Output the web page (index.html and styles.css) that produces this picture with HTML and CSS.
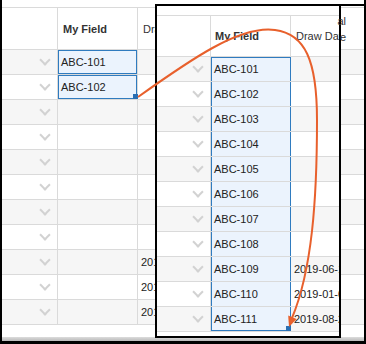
FILE: index.html
```html
<!DOCTYPE html>
<html lang="en">
<head>
    <meta charset="UTF-8">
    <title>Drag Fill</title>
    <link rel="stylesheet" href="styles.css">
</head>
<body>
    <div class="frame">
        <div class="grid">
            <div class="hdr">
                <div class="cell"></div>
                <div class="cell">My Field</div>
                <div class="cell">Draw Date</div>
            </div>
            <div class="rows">
                <div class="row"><div class="cell chev"></div><div class="cell sel">ABC-101</div><div class="cell"></div></div>
                <div class="row"><div class="cell chev"></div><div class="cell sel handle">ABC-102</div><div class="cell"></div></div>
                <div class="row"><div class="cell chev"></div><div class="cell"></div><div class="cell"></div></div>
                <div class="row"><div class="cell chev"></div><div class="cell"></div><div class="cell"></div></div>
                <div class="row"><div class="cell chev"></div><div class="cell"></div><div class="cell"></div></div>
                <div class="row"><div class="cell chev"></div><div class="cell"></div><div class="cell"></div></div>
                <div class="row"><div class="cell chev"></div><div class="cell"></div><div class="cell"></div></div>
                <div class="row"><div class="cell chev"></div><div class="cell"></div><div class="cell"></div></div>
                <div class="row"><div class="cell chev"></div><div class="cell"></div><div class="cell">2019-06-12</div></div>
                <div class="row"><div class="cell chev"></div><div class="cell"></div><div class="cell">2019-01-08</div></div>
                <div class="row"><div class="cell chev"></div><div class="cell"></div><div class="cell">2019-08-21</div></div>
            </div>
        </div>
        <div class="hscroll"></div>

        <!-- zoomed copy of the grid after the drag -->
        <div class="zoom">
            <div class="hdr">
                <div class="cell"></div>
                <div class="cell">My Field</div>
                <div class="cell">Draw Date</div>
            </div>
            <div class="rows">
                <div class="row"><div class="cell chev"></div><div class="cell fill first">ABC-101</div><div class="cell"></div></div>
                <div class="row"><div class="cell chev"></div><div class="cell fill">ABC-102</div><div class="cell"></div></div>
                <div class="row"><div class="cell chev"></div><div class="cell fill">ABC-103</div><div class="cell"></div></div>
                <div class="row"><div class="cell chev"></div><div class="cell fill">ABC-104</div><div class="cell"></div></div>
                <div class="row"><div class="cell chev"></div><div class="cell fill">ABC-105</div><div class="cell"></div></div>
                <div class="row"><div class="cell chev"></div><div class="cell fill">ABC-106</div><div class="cell"></div></div>
                <div class="row"><div class="cell chev"></div><div class="cell fill">ABC-107</div><div class="cell"></div></div>
                <div class="row"><div class="cell chev"></div><div class="cell fill">ABC-108</div><div class="cell"></div></div>
                <div class="row"><div class="cell chev"></div><div class="cell fill">ABC-109</div><div class="cell">2019-06-12</div></div>
                <div class="row"><div class="cell chev"></div><div class="cell fill">ABC-110</div><div class="cell">2019-01-08</div></div>
                <div class="row"><div class="cell chev"></div><div class="cell fill last">ABC-111</div><div class="cell">2019-08-21</div></div>
            </div>
        </div>
        <div class="cut">al<br>e</div>
        <div class="topline"></div>

        <svg class="arrow" width="366" height="344" viewBox="0 0 366 344">
            <path d="M138 97 C190 60 240 25 275 30 C305 34 317 60 317 120 C317 200 312 270 292 318" fill="none" stroke="#e8602c" stroke-width="2"/>
            <polygon points="289,327 296.5,319 288.2,315.6" fill="#e8602c"/>
        </svg>
    </div>
</body>
</html>
```

FILE: styles.css
```css
body { margin: 0; }

.frame {
    position: relative;
    width: 366px; height: 344px;
    box-sizing: border-box;
    border-left: 2px solid #000;
    border-right: 2px solid #000;
    border-bottom: 3px solid #000;
    overflow: hidden;
    display: flex; flex-direction: column;
    background: #fff;
    font-family: "Liberation Sans", Arial, sans-serif;
    font-size: 11px;
    color: #222;
}

.grid { flex: 1; padding-top: 7px; overflow: hidden; }

.hdr, .row { display: grid; grid-template-columns: 56px 80px 1fr; }
.hdr {
    height: 43px; box-sizing: border-box;
    border-top: 1px solid #dadada;
    border-bottom: 1px solid #dadada;
    font-weight: bold; color: #333;
}
.hdr .cell { padding-left: 5px; }
.hdr .cell:last-child { font-weight: normal; }
.row {
    height: 25px; box-sizing: border-box;
    border-bottom: 1px solid #dadada;
}
.rows .row:nth-child(odd) { background: #f6f6f6; }

.cell {
    position: relative;
    display: flex; align-items: center;
    padding-left: 3px;
    border-right: 1px solid #dadada;
    white-space: nowrap; overflow: visible;
}
.cell:last-child { border-right: 0; }

.chev { justify-content: flex-end; padding-right: 8px; }
.chev::after {
    content: "";
    width: 6px; height: 6px;
    margin-top: -4px;
    border-right: 2px solid #d2d2d2;
    border-bottom: 2px solid #d2d2d2;
    transform: rotate(45deg);
}

/* selected cells in the grid behind */
.sel { background: #ebf3fd; box-shadow: inset 0 0 0 1px #2f7bbf; }
.handle::after, .last::after {
    content: "";
    position: absolute; right: -1px; bottom: 0;
    width: 5px; height: 5px;
    background: #2a6fb3;
}

.hscroll {
    height: 4px;
    background: linear-gradient(#dcdcdc, #b9b9b9);
}

/* zoomed panel */
.zoom {
    position: absolute; left: 153px; top: 4px;
    width: 186px; height: 334px;
    box-sizing: border-box;
    border: 2px solid #000;
    background: #fff;
    padding-top: 9px;
    overflow: hidden;
}
.zoom .hdr, .zoom .row { grid-template-columns: 54px 80px 1fr; }
.zoom .hdr { height: 42px; }
.zoom .hdr .cell { padding-left: 4px; }
.zoom .hdr .cell:last-child { padding-left: 5px; }

.fill {
    background: #ebf3fd;
    border-right-color: #2f7bbf;
    box-shadow: inset 1px 0 0 #2f7bbf;
}
.fill.first { box-shadow: inset 1px 1px 0 #2f7bbf; }
.fill.last { box-shadow: inset 1px -1px 0 #2f7bbf; }

.cut {
    position: absolute; left: 333px; top: 13px;
    width: 11px; line-height: 16px; text-align: right;
    color: #333;
}
.topline {
    position: absolute; left: 337px; right: 0; top: 4px;
    height: 2px; background: #000;
}

.arrow { position: absolute; left: -2px; top: 0; pointer-events: none; }
```
